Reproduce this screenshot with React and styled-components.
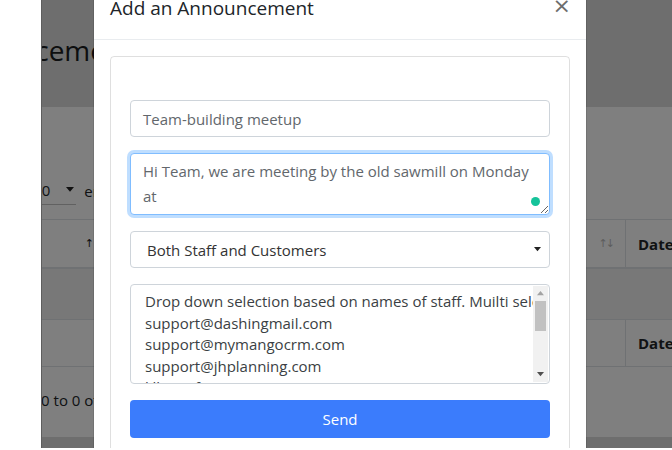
import React from "react";
import styled, { createGlobalStyle } from "styled-components";

const GlobalStyle = createGlobalStyle`
  html, body {
    margin: 0;
    padding: 0;
    background: #fff;
  }
  body {
    font-family: "Open Sans", "Noto Sans", "Liberation Sans", sans-serif;
    color: #212529;
  }
`;

// Whole screenshot: a white gutter on the left, then the dimmed app
const Screen = styled.div`
  display: flex;
  width: 672px;
  height: 448px;
  overflow: hidden;
`;

const Gutter = styled.div`
  flex: 0 0 41px;
  background: #fff;
`;

const Stage = styled.div`
  position: relative;
  flex: 1;
  overflow: hidden;
  border-left: 1px solid #5e5e5e;
`;

// ---------- page behind the modal ----------

const Page = styled.div`
  display: flex;
  flex-direction: column;
  height: 100%;
  background: #fff;
`;

const PageHeader = styled.header`
  display: flex;
  align-items: center;
  height: 107px;
  background: #dcdcdc;
`;

const PageTitle = styled.h1`
  margin: 0 0 8px ${p => p.indent}px;
  font-size: 28px;
  font-weight: 400;
  white-space: nowrap;
  color: #1a1d20;
`;

const LengthControl = styled.div`
  display: flex;
  align-items: center;
  gap: 8px;
  margin: 72px 0 0 ${p => p.indent}px;
  height: 24px;
  font-size: 15px;
  white-space: nowrap;
`;

const LengthSelect = styled.span`
  display: flex;
  align-items: center;
  gap: 16px;
  padding: 2px 2px 4px 2px;
  border-bottom: 1px solid #c2c2c2;

  b {
    font-weight: 400;
  }
`;

const Table = styled.div`
  display: grid;
  grid-template-columns: 62px 521px 1fr;
  margin-top: 16px;
  border-top: 1px solid #dee2e6;
`;

const HeadCell = styled.div`
  display: flex;
  align-items: center;
  justify-content: ${p => (p.sort ? "flex-end" : "flex-start")};
  height: ${p => (p.foot ? "46px" : "47px")};
  padding: 0 12px;
  border-left: ${p => (p.first ? "none" : "1px solid #dee2e6")};
  border-bottom: ${p => (p.foot ? "1px" : "2px")} solid #dee2e6;
  font-size: 15px;
  font-weight: 700;
  white-space: nowrap;
`;

const SortIcon = styled.span`
  font-family: "DejaVu Sans", sans-serif;
  font-size: 11px;
  font-weight: 400;
  letter-spacing: -2px;
  color: ${p => (p.dim ? "#bbb" : "#222")};
`;

const EmptyRow = styled.div`
  grid-column: 1 / -1;
  height: 50px;
  background: #f1f1f1;
  border-bottom: 1px solid #dee2e6;
`;

const Info = styled.div`
  margin: 23px 0 0 ${p => p.indent}px;
  font-size: 15px;
  white-space: nowrap;
`;

const PageFooter = styled.div`
  margin-top: auto;
  height: 11px;
  background: #dcdcdc;
`;

const Backdrop = styled.div`
  position: absolute;
  inset: 0;
  background: rgba(0, 0, 0, 0.5);
`;

// ---------- modal ----------

const Dialog = styled.div`
  position: absolute;
  top: -23px;
  left: 52px;
  width: 492px;
  height: 480px;
  background: #fff;
  border-radius: 5px;
  box-shadow: 0 0 0 1px rgba(0, 0, 0, 0.1);
`;

const DialogHeader = styled.div`
  display: flex;
  align-items: center;
  justify-content: space-between;
  padding: 16px;
  border-bottom: 1px solid #e9ecef;
`;

const DialogTitle = styled.h5`
  margin: 0;
  font-size: 19px;
  line-height: 30px;
  font-weight: 500;
  color: #212529;
`;

const CloseButton = styled.button`
  border: 0;
  background: none;
  padding: 0;
  margin: -5px -1px 0 0;
  font-family: "DejaVu Sans", sans-serif;
  font-size: 22px;
  line-height: 1;
  color: #6d6d6d;
`;

const DialogBody = styled.div`
  padding: 16px;
`;

const Card = styled.div`
  display: flex;
  flex-direction: column;
  gap: 16px;
  padding: 43px 19px 20px;
  border: 1px solid rgba(0, 0, 0, 0.125);
  border-radius: 4px;
`;

const fieldBase = `
  box-sizing: border-box;
  width: 100%;
  border: 1px solid #ced4da;
  border-radius: 4px;
  background: #fff;
  font-family: inherit;
  font-size: 15px;
`;

const TextInput = styled.div`
  ${fieldBase}
  display: flex;
  align-items: center;
  height: 37px;
  padding: 0 12px;
  color: #62676c;
`;

const AreaWrap = styled.div`
  position: relative;
`;

const TextArea = styled.textarea`
  ${fieldBase}
  display: block;
  height: 62px;
  padding: 5px 12px;
  line-height: 25px;
  color: #62676c;
  border-color: #80bdff;
  box-shadow: 0 0 0 3px rgba(0, 123, 255, 0.25);
  outline: none;
  resize: vertical;
`;

const GrammarDot = styled.span`
  position: absolute;
  right: 10px;
  bottom: 9px;
  width: 9px;
  height: 9px;
  border-radius: 50%;
  background: #15c39a;
`;

const Select = styled.div`
  ${fieldBase}
  display: flex;
  align-items: center;
  justify-content: space-between;
  height: 37px;
  padding: 0 8px 0 16px;
  color: #333;
`;

const MultiSelect = styled.div`
  ${fieldBase}
  display: flex;
  height: 100px;
  overflow: hidden;
  color: #3b3f44;
`;

const Options = styled.div`
  flex: 1;
  min-width: 0;
  padding: 6px 0 0 14px;
  line-height: 21.6px;
  white-space: nowrap;
  overflow: hidden;
`;

const Scrollbar = styled.div`
  display: flex;
  flex-direction: column;
  align-items: center;
  flex: 0 0 15px;
  margin: 1px 1px 1px 0;
  background: #f1f1f1;
`;

const ScrollArrow = styled.div`
  display: flex;
  align-items: center;
  justify-content: center;
  height: 15px;
  width: 100%;
`;

const ScrollThumb = styled.div`
  width: 11px;
  height: 30px;
  background: #c1c1c1;
`;

const ScrollTrack = styled.div`
  flex: 1;
`;

const SendButton = styled.button`
  height: 38px;
  border: 0;
  border-radius: 4px;
  background: #3b7cfc;
  color: #fff;
  font-family: inherit;
  font-size: 15px;
`;

const Triangle = ({ dir = "down", size = 7, color = "#222" }) => (
  <svg width={size} height={size * 0.6} viewBox="0 0 10 6">
    <path d={dir === "down" ? "M0 0h10L5 6z" : "M0 6h10L5 0z"} fill={color} />
  </svg>
);

const emails = [
  "Drop down selection based on names of staff. Muilti select",
  "support@dashingmail.com",
  "support@mymangocrm.com",
  "support@jhplanning.com",
  "lillian@fiverr.com",
];

export default function App() {
  return (
    <>
      <GlobalStyle />
      <Screen>
        <Gutter />
        <Stage>
          <Page>
            <PageHeader>
              <PageTitle indent={-110}>Announcements</PageTitle>
            </PageHeader>
            <LengthControl indent={-57}>
              <span>Show</span>
              <LengthSelect>
                <b>10</b>
                <Triangle size={8} />
              </LengthSelect>
              <span>entries</span>
            </LengthControl>
            <Table>
              <HeadCell first sort>
                <SortIcon>↑</SortIcon>
              </HeadCell>
              <HeadCell sort>
                <SortIcon dim>↑↓</SortIcon>
              </HeadCell>
              <HeadCell>Date</HeadCell>
              <EmptyRow />
              <HeadCell first foot />
              <HeadCell foot />
              <HeadCell foot>Date</HeadCell>
            </Table>
            <Info indent={-64}>Showing 0 to 0 of 0 entries</Info>
            <PageFooter />
          </Page>
          <Backdrop />
          <Dialog>
            <DialogHeader>
              <DialogTitle>Add an Announcement</DialogTitle>
              <CloseButton>×</CloseButton>
            </DialogHeader>
            <DialogBody>
              <Card>
                <TextInput>Team-building meetup</TextInput>
                <AreaWrap>
                  <TextArea
                    readOnly
                    value="Hi Team, we are meeting by the old sawmill on Monday at"
                  />
                  <GrammarDot />
                </AreaWrap>
                <Select>
                  <span>Both Staff and Customers</span>
                  <Triangle />
                </Select>
                <MultiSelect>
                  <Options>
                    {emails.map(e => (
                      <div key={e}>{e}</div>
                    ))}
                  </Options>
                  <Scrollbar>
                    <ScrollArrow>
                      <Triangle dir="up" size={7} color="#a3a3a3" />
                    </ScrollArrow>
                    <ScrollThumb />
                    <ScrollTrack />
                    <ScrollArrow>
                      <Triangle size={7} color="#505050" />
                    </ScrollArrow>
                  </Scrollbar>
                </MultiSelect>
                <SendButton>Send</SendButton>
              </Card>
            </DialogBody>
          </Dialog>
        </Stage>
      </Screen>
    </>
  );
}
